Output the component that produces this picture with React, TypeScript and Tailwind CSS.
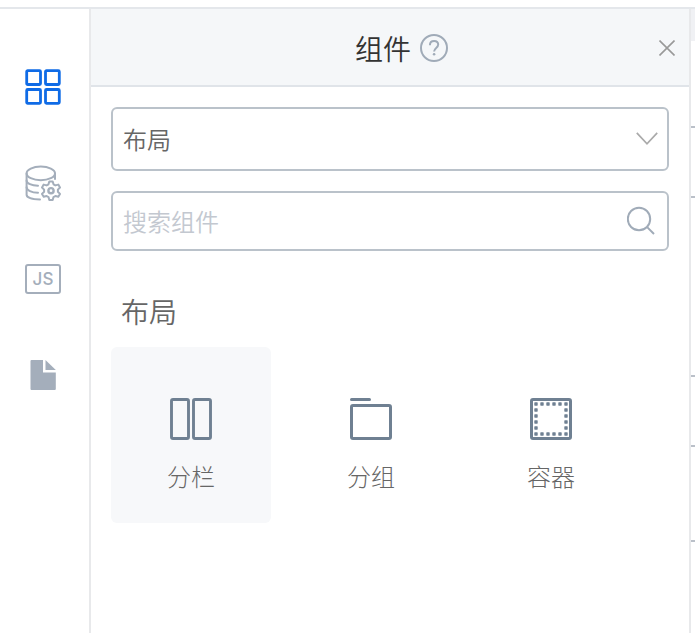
import React, { useState } from "react";

const SidebarGridIcon = () => (
  <svg viewBox="0 0 36 36" className="w-9 h-9" fill="none" stroke="currentColor" strokeWidth="2.8">
    <rect x="1.7" y="1.7" width="13.8" height="13.8" rx="1" />
    <rect x="20.5" y="1.7" width="13.8" height="13.8" rx="1" />
    <rect x="1.7" y="20.5" width="13.8" height="13.8" rx="1" />
    <rect x="20.5" y="20.5" width="13.8" height="13.8" rx="1" />
  </svg>
);

const DataIcon = () => (
  <svg
    viewBox="0 0 36 36"
    className="w-9 h-9"
    fill="none"
    stroke="currentColor"
    strokeWidth="2"
    strokeLinecap="round"
    strokeLinejoin="round"
  >
    <ellipse cx="15.8" cy="8.4" rx="14.2" ry="6.8" />
    <path d="M1.6 8.4v21.4c0 2.7 5.6 4.5 13.4 4.6" />
    <path d="M30 8.4v5.6" />
    <path d="M1.6 15.4c0 3 5 5.2 11.4 5.4" />
    <path d="M1.6 22.3c0 3 5 5.3 11.4 5.5" />
    <path d="M24.3 16.4H27.7L28.5 19.3L30.4 20.4L33.3 19.6L35 22.5L32.9 24.6V26.8L35 28.9L33.3 31.8L30.4 31L28.5 32.1L27.7 35H24.3L23.5 32.1L21.6 31L18.7 31.8L17 28.9L19.1 26.8V24.6L17 22.5L18.7 19.6L21.6 20.4L23.5 19.3Z" />
    <circle cx="26" cy="25.7" r="2.6" strokeWidth="2.4" />
  </svg>
);

const ScriptIcon = () => (
  <span className="flex w-9 h-[30px] items-center justify-center rounded-[3px] border-2 border-current font-['Inter','Liberation_Sans',sans-serif] text-[17px] leading-none font-medium">
    JS
  </span>
);

const PageIcon = () => (
  <svg viewBox="0 0 36 36" className="w-9 h-9" fill="currentColor">
    <path d="M6.5 3H18v12.5h12.8V32a1 1 0 0 1-1 1H6.5a1 1 0 0 1-1-1V4a1 1 0 0 1 1-1z" />
    <path d="M20.5 3L30.8 13H20.5z" />
  </svg>
);

const ColumnsIcon = () => (
  <svg viewBox="0 0 42 42" className="w-[42px] h-[42px]" fill="none" stroke="currentColor" strokeWidth="2.9">
    <rect x="1.5" y="1.5" width="17" height="39" rx="1.5" />
    <rect x="23.5" y="1.5" width="17" height="39" rx="1.5" />
  </svg>
);

const GroupIcon = () => (
  <svg viewBox="0 0 42 42" className="w-[42px] h-[42px]" fill="none" stroke="currentColor" strokeWidth="3">
    <path d="M1.5 1.5H19.5" strokeLinecap="round" />
    <rect x="1.5" y="7.5" width="39" height="33" rx="1.5" />
  </svg>
);

const dots = [4, 10, 16, 22, 28, 34];

const ContainerIcon = () => (
  <svg viewBox="0 0 42 42" className="w-[42px] h-[42px]" fill="none" stroke="currentColor" strokeWidth="3">
    <rect x="1.5" y="1.5" width="39" height="39" rx="1.5" />
    <g fill="currentColor" stroke="none">
      {dots.map((y) =>
        dots
          .filter((x) => x === 4 || x === 34 || y === 4 || y === 34)
          .map((x) => <rect key={`${x}-${y}`} x={x + 0.3} y={y + 0.3} width="3.4" height="3.4" rx="0.6" />)
      )}
    </g>
  </svg>
);

const navItems = [
  { id: "components", label: "组件", icon: <SidebarGridIcon /> },
  { id: "data", label: "数据源", icon: <DataIcon /> },
  { id: "script", label: "脚本", icon: <ScriptIcon /> },
  { id: "page", label: "页面", icon: <PageIcon /> }
];

const layoutItems = [
  { id: "columns", label: "分栏", icon: <ColumnsIcon /> },
  { id: "group", label: "分组", icon: <GroupIcon /> },
  { id: "container", label: "容器", icon: <ContainerIcon /> }
];

export default function App() {
  const [activeNav, setActiveNav] = useState("components");
  const [activeItem, setActiveItem] = useState("columns");
  const [keyword, setKeyword] = useState("");

  return (
    <div className="flex min-h-screen flex-col bg-white pt-[7px] font-['Noto_Sans_CJK_SC',sans-serif] font-[350]">
      <div className="flex flex-1 border-t-2 border-[#e4e7eb]">
        {/* Sidebar */}
        <nav className="flex shrink-0 flex-col items-center gap-[60px] border-r-2 border-[#e8e9eb] pl-[25px] pr-7 pt-[60px]">
          {navItems.map((item) => (
            <button
              key={item.id}
              aria-label={item.label}
              onClick={() => setActiveNav(item.id)}
              className={`flex h-9 w-9 items-center justify-center cursor-pointer ${
                activeNav === item.id ? "text-[#0f6be6]" : "text-[#a4aebb]"
              }`}
            >
              {item.icon}
            </button>
          ))}
        </nav>

        {/* Component panel */}
        <section className="min-w-0 flex-1 border-r-2 border-[#e8e9eb]">
          <header className="flex h-[78px] items-center border-b-2 border-[#e0e4e9] bg-[#f5f7f9] pl-14 pr-3 pt-0.5">
            <div className="flex flex-1 items-center justify-center gap-2">
              <h1 className="text-[28px] leading-10 text-[#333333]">组件</h1>
              <button aria-label="帮助" className="text-[#a0abb8] cursor-pointer">
                <svg viewBox="0 0 30 30" className="h-[30px] w-[30px]" fill="none" stroke="currentColor" strokeWidth="2">
                  <circle cx="15" cy="15" r="13" />
                  <path d="M10.9 12.2c0-2.6 1.7-4.3 4.2-4.3 2.4 0 4.1 1.5 4.1 3.7 0 3.3-4.1 3.5-4.1 7" />
                  <circle cx="15.1" cy="21.3" r="1.3" fill="currentColor" stroke="none" />
                </svg>
              </button>
            </div>
            <button aria-label="关闭" className="flex w-5 justify-center text-[#999999] cursor-pointer">
              <svg viewBox="0 0 16 16" className="h-4 w-4" fill="none" stroke="currentColor" strokeWidth="1.6">
                <path d="M0.5 0.5l15 15M15.5 0.5l-15 15" />
              </svg>
            </button>
          </header>

          <div className="p-5">
            <div className="relative">
              <select
                aria-label="组件分类"
                className="block h-16 w-full appearance-none rounded-md border-2 border-[#bac2ca] bg-white px-2.5 text-2xl text-[#666666] outline-none"
              >
                <option>布局</option>
              </select>
              <svg
                viewBox="0 0 22 14"
                className="pointer-events-none absolute right-[11px] top-[25px] h-3.5 w-[22px] text-[#aaaaaa]"
                fill="none"
                stroke="currentColor"
                strokeWidth="1.7"
              >
                <path d="M0.8 0.8L11 11.8L21.2 0.8" />
              </svg>
            </div>

            <label className="mt-5 flex h-[60px] items-center rounded-md border-2 border-[#bac2ca] bg-white px-2.5">
              <input
                type="text"
                aria-label="搜索组件"
                placeholder="搜索组件"
                value={keyword}
                onChange={(e) => setKeyword(e.target.value)}
                className="min-w-0 flex-1 text-2xl text-[#666666] outline-none placeholder:text-[#c3c8d0]"
              />
              <svg viewBox="0 0 30 30" className="h-[30px] w-[30px] text-[#a0abb8]" fill="none" stroke="currentColor" strokeWidth="2">
                <circle cx="12" cy="13" r="11.2" />
                <path d="M19.9 20.9L27 28" />
              </svg>
            </label>

            <h2 className="mt-10 px-2.5 text-[28px] leading-10 text-[#666666]">布局</h2>

            <div className="mt-4 flex flex-wrap gap-5">
              {layoutItems.map((item) => (
                <button
                  key={item.id}
                  onClick={() => setActiveItem(item.id)}
                  className={`flex h-44 w-40 flex-col items-center justify-center gap-5 rounded-md pt-5 cursor-pointer ${
                    activeItem === item.id ? "bg-[#f7f8fa]" : "bg-white"
                  }`}
                >
                  <span className="text-[#6f8092]">{item.icon}</span>
                  <span className="text-2xl font-light text-[#666666]">{item.label}</span>
                </button>
              ))}
            </div>
          </div>
        </section>

        {/* Edge of the form canvas */}
        <aside className="w-1 shrink-0">
          <div className="h-8 bg-[#f0f1f4]" />
          <div className="mt-[85px] h-[72px] border-y-2 border-[#bac0c9]" />
          <div className="mt-[177px] h-[72px] border-y-2 border-[#bac0c9]" />
          <div className="mt-[93px] border-t-2 border-[#bac0c9]" />
        </aside>
      </div>
    </div>
  );
}
